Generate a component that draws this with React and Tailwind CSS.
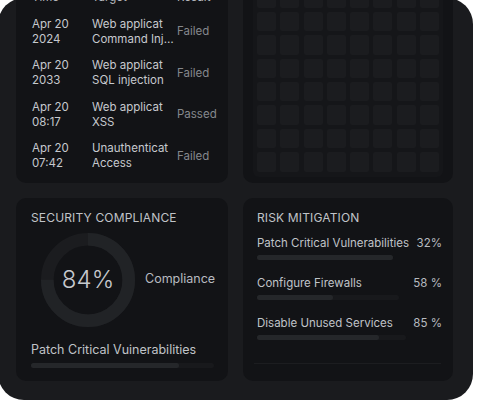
import React from "react";

const rows = [
  { d1: "Apr 20", d2: "2024", t1: "Web applicat", t2: "Command Injection", r: "Failed" },
  { d1: "Apr 20", d2: "2033", t1: "Web applicat", t2: "SQL injection", r: "Failed" },
  { d1: "Apr 20", d2: "08:17", t1: "Web applicat", t2: "XSS", r: "Passed" },
  { d1: "Apr 20", d2: "07:42", t1: "Unauthenticat", t2: "Access", r: "Failed" },
];

const risks = [
  { label: "Patch Critical Vulnerabilities", pct: "32%", track: 136, fill: 136 },
  { label: "Configure Firewalls", pct: "58 %", track: 142, fill: 76 },
  { label: "Disable Unused Services", pct: "85 %", track: 149, fill: 122 },
];

const cells = Array.from({ length: 72 }, (_, i) => i);

function Donut() {
  const r = 40.7;
  const c = 2 * Math.PI * r;
  return (
    <div className="relative w-[94px] h-[94px] shrink-0">
      <svg width="94" height="94" viewBox="0 0 94 94">
        <circle cx="47" cy="47" r={r} fill="none" stroke="#1b1c1f" strokeWidth="12.6" />
        <circle
          cx="47"
          cy="47"
          r={r}
          fill="none"
          stroke="#212326"
          strokeWidth="12.6"
          strokeDasharray={`${c * 0.75} ${c}`}
          transform="rotate(-90 47 47)"
        />
      </svg>
      <div className="absolute inset-0 flex items-center justify-center text-[24px] font-light text-[#c6c9ce] leading-none">
        84%
      </div>
    </div>
  );
}

export default function App() {
  return (
    <div className="w-[478px] h-[400px] overflow-hidden bg-white font-['Inter',sans-serif]">
      <div className="ml-[-2px] mt-[-2px] w-[475px] h-[402px] rounded-[26px] overflow-hidden bg-[#1a1b1e] pl-[18px] pr-[20px]">
        <div className="mt-[-22px] flex flex-col gap-[15px]">
          {/* top row */}
          <div className="grid grid-cols-[212px_210px] grid-rows-[207px] gap-[15px] h-[207px]">
            <div className="min-h-0 overflow-hidden rounded-[10px] bg-[#121316] pt-[14px] px-[16px] flex flex-col gap-[11.6px] text-[11.5px] leading-[15px]">
              <div className="flex text-[#b5b8bd]">
                <div className="w-[60px] shrink-0">Time</div>
                <div className="w-[85px] shrink-0">Target</div>
                <div className="shrink-0">Result</div>
              </div>
              {rows.map((row, i) => (
                <div key={i} className="flex items-center">
                  <div className="w-[60px] shrink-0 text-[#c6c9ce]">
                    <div>{row.d1}</div>
                    <div>{row.d2}</div>
                  </div>
                  <div className="w-[85px] shrink-0 pr-[3px] text-[#c6c9ce]">
                    <div className="whitespace-nowrap overflow-hidden">{row.t1}</div>
                    <div className="truncate">{row.t2}</div>
                  </div>
                  <div className="shrink-0 text-[#85888d]">{row.r}</div>
                </div>
              ))}
            </div>
            <div className="min-h-0 overflow-hidden rounded-[10px] bg-[#121316] pt-[10px] px-[10px] pb-[6.5px] flex">
              <div className="flex-1 min-h-0 rounded-[6px] bg-[#151619] overflow-hidden flex flex-col justify-end px-[4px] pb-[5px]">
                <div className="grid grid-cols-8 gap-[4.1px] shrink-0">
                  {cells.map((i) => (
                    <div key={i} className="h-[19.3px] rounded-[2px] bg-[#1b1c1f]" />
                  ))}
                </div>
              </div>
            </div>
          </div>

          {/* bottom row */}
          <div className="grid grid-cols-[212px_210px] grid-rows-[183px] gap-[15px] h-[183px]">
            <div className="rounded-[10px] bg-[#121316] pt-[12px] px-[15px]">
              <div className="text-[12px] leading-[16px] tracking-[0.15px] text-[#c0c3c8]">SECURITY COMPLIANCE</div>
              <div className="mt-[6.7px] pl-[10px] flex items-center gap-[10px]">
                <Donut />
                <div className="text-[12.5px] text-[#b8bbc0]">Compliance</div>
              </div>
              <div className="mt-[15px] text-[12.5px] leading-[16px] text-[#c0c3c8] whitespace-nowrap">Patch Critical Vuinerabilities</div>
              <div className="mt-[5.5px] w-[183px] h-[5px] rounded-full bg-[#18191c]">
                <div className="w-[148px] h-full rounded-full bg-[#25272a]" />
              </div>
            </div>
            <div className="rounded-[10px] bg-[#121316] pt-[12px] pl-[14px] pr-[11px]">
              <div className="text-[12px] leading-[16px] tracking-[0.15px] text-[#c0c3c8]">RISK MITIGATION</div>
              <div className="mt-[9px] flex flex-col gap-[15px]">
                {risks.map((it, i) => (
                  <div key={i}>
                    <div className="flex justify-between text-[11.5px] leading-[16px] whitespace-nowrap">
                      <span className="text-[#c0c3c8]">{it.label}</span>
                      <span className="text-[#b8bbc0]">{it.pct}</span>
                    </div>
                    <div className="mt-[4px] h-[5px] rounded-full bg-[#18191c]" style={{ width: it.track }}>
                      <div className="h-full rounded-full bg-[#25272a]" style={{ width: it.fill }} />
                    </div>
                  </div>
                ))}
              </div>
              <div className="mt-[23px] ml-[-3px] w-[187px] h-px bg-[#1c1d20]" />
            </div>
          </div>
        </div>
      </div>
    </div>
  );
}
